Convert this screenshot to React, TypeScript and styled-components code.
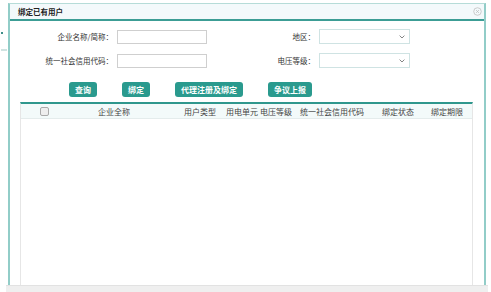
import React from 'react'
import styled, { createGlobalStyle } from 'styled-components'

const GlobalStyle = createGlobalStyle`
  html, body {
    margin: 0;
    padding: 0;
    background: #ffffff;
  }
  body {
    font-family: "Noto Sans CJK SC", "Noto Sans", sans-serif;
    color: #333;
  }
`

const teal = '#2a9a8e'

const Page = styled.div`
  width: 491px;
  height: 292px;
  overflow: hidden;
  display: flex;
  flex-direction: row;
  background: #fff;
`

const LeftStrip = styled.div`
  width: 8px;
  display: flex;
  flex-direction: column;
  align-items: flex-start;
  padding-top: 32px;
  gap: 15px;
`

const Mark = styled.span<{ $w: number; $light?: boolean }>`
  display: block;
  width: ${p => p.$w}px;
  height: 2px;
  margin-left: 1px;
  background: ${p => (p.$light ? '#cfe3e1' : '#3f8f89')};
`

const Column = styled.div`
  display: flex;
  flex-direction: column;
  padding-top: 3px;
`

const Dialog = styled.div`
  width: 478px;
  height: 283px;
  border-left: 2px solid #92cdc8;
  border-right: 2px solid #92cdc8;
  border-top: 1px solid #b6dcd8;
  box-sizing: border-box;
  background: #fff;
  display: flex;
  flex-direction: column;
`

const Header = styled.div`
  height: 15px;
  background: #f3f9fb;
  border-bottom: 2px solid #3c9d95;
  display: flex;
  align-items: center;
  justify-content: space-between;
  padding: 0 2px 0 8px;
`

const Title = styled.span`
  font-size: 7.5px;
  font-weight: bold;
  color: #222;
`

const Close = styled.svg`
  width: 9px;
  height: 9px;
`

const FormGrid = styled.div`
  display: grid;
  grid-template-columns: 103px 90px 104px 91px;
  column-gap: 4px;
  row-gap: 9px;
  padding-top: 8px;
  align-items: center;
`

const Label = styled.label`
  font-size: 7.5px;
  text-align: right;
  color: #333;
  white-space: nowrap;
`

const Input = styled.div`
  height: 14px;
  border: 1px solid #cfcfcf;
  box-sizing: border-box;
  background: #fff;
`

const Select = styled.div`
  height: 15px;
  border: 1px solid #cfe3e3;
  box-sizing: border-box;
  background: #fff;
  display: flex;
  align-items: center;
  justify-content: flex-end;
  padding-right: 4px;
`

const ButtonRow = styled.div`
  display: flex;
  gap: 25px;
  padding-left: 59px;
  margin-top: 14px;
`

const Button = styled.button`
  height: 15px;
  padding: 0 6px;
  border: none;
  border-radius: 3px;
  background: ${teal};
  color: #fff;
  font-family: inherit;
  font-size: 8px;
  font-weight: bold;
  line-height: 15px;
  white-space: nowrap;
`

const Table = styled.div`
  margin: 5px 11px 0 10px;
  flex: 1;
  border-top: 2px solid #2f978d;
  border-left: 1px solid #e6e6e6;
  border-right: 1px solid #e6e6e6;
  display: flex;
  flex-direction: column;
`

const HeadRow = styled.div`
  display: grid;
  grid-template-columns: 46px 117px 42px 34px 40px 82px 49px 44px;
  height: 14px;
  background: #f3fafa;
  border-bottom: 1px solid #e4ecec;
  align-items: center;
`

const Th = styled.div<{ $pad?: number }>`
  font-size: 8px;
  color: #444;
  white-space: nowrap;
  padding-left: ${p => p.$pad ?? 0}px;
  display: flex;
  align-items: center;
`

const CheckCell = styled.div`
  display: flex;
  justify-content: center;
`

const Check = styled.span`
  width: 7px;
  height: 7px;
  border: 1px solid #aaa;
  border-radius: 2px;
  background: #eee;
`

const Footer = styled.div`
  margin-left: -2px;
  width: 482px;
  height: 6px;
  background: #efefef;
  border-top: 1px solid #e2e2e2;
`

const Chevron = () => (
  <svg width="6" height="4" viewBox="0 0 6 4">
    <path d="M0.6 0.6 L3 3 L5.4 0.6" fill="none" stroke="#777" strokeWidth="0.9" />
  </svg>
)

const columns = [
  { text: '企业全称', pad: 31 },
  { text: '用户类型' },
  { text: '用电单元' },
  { text: '电压等级' },
  { text: '统一社会信用代码' },
  { text: '绑定状态' },
  { text: '绑定期限' },
]

export default function App() {
  return (
    <Page>
      <GlobalStyle />
      <LeftStrip>
        <Mark $w={2} />
        <Mark $w={6} $light />
      </LeftStrip>
      <Column>
        <Dialog>
          <Header>
            <Title>绑定已有用户</Title>
            <Close viewBox="0 0 10 10">
              <circle cx="5" cy="5" r="4.2" fill="none" stroke="#bbb" strokeWidth="0.8" />
              <path d="M3.4 3.4 L6.6 6.6 M6.6 3.4 L3.4 6.6" stroke="#bbb" strokeWidth="0.8" />
            </Close>
          </Header>
          <FormGrid>
            <Label>企业名称/简称：</Label>
            <Input />
            <Label>地区：</Label>
            <Select><Chevron /></Select>
            <Label>统一社会信用代码：</Label>
            <Input />
            <Label>电压等级：</Label>
            <Select><Chevron /></Select>
          </FormGrid>
          <ButtonRow>
            <Button>查询</Button>
            <Button>绑定</Button>
            <Button>代理注册及绑定</Button>
            <Button>争议上报</Button>
          </ButtonRow>
          <Table>
            <HeadRow>
              <CheckCell><Check /></CheckCell>
              {columns.map(c => (
                <Th key={c.text} $pad={c.pad}>{c.text}</Th>
              ))}
            </HeadRow>
          </Table>
        </Dialog>
        <Footer />
      </Column>
    </Page>
  )
}
